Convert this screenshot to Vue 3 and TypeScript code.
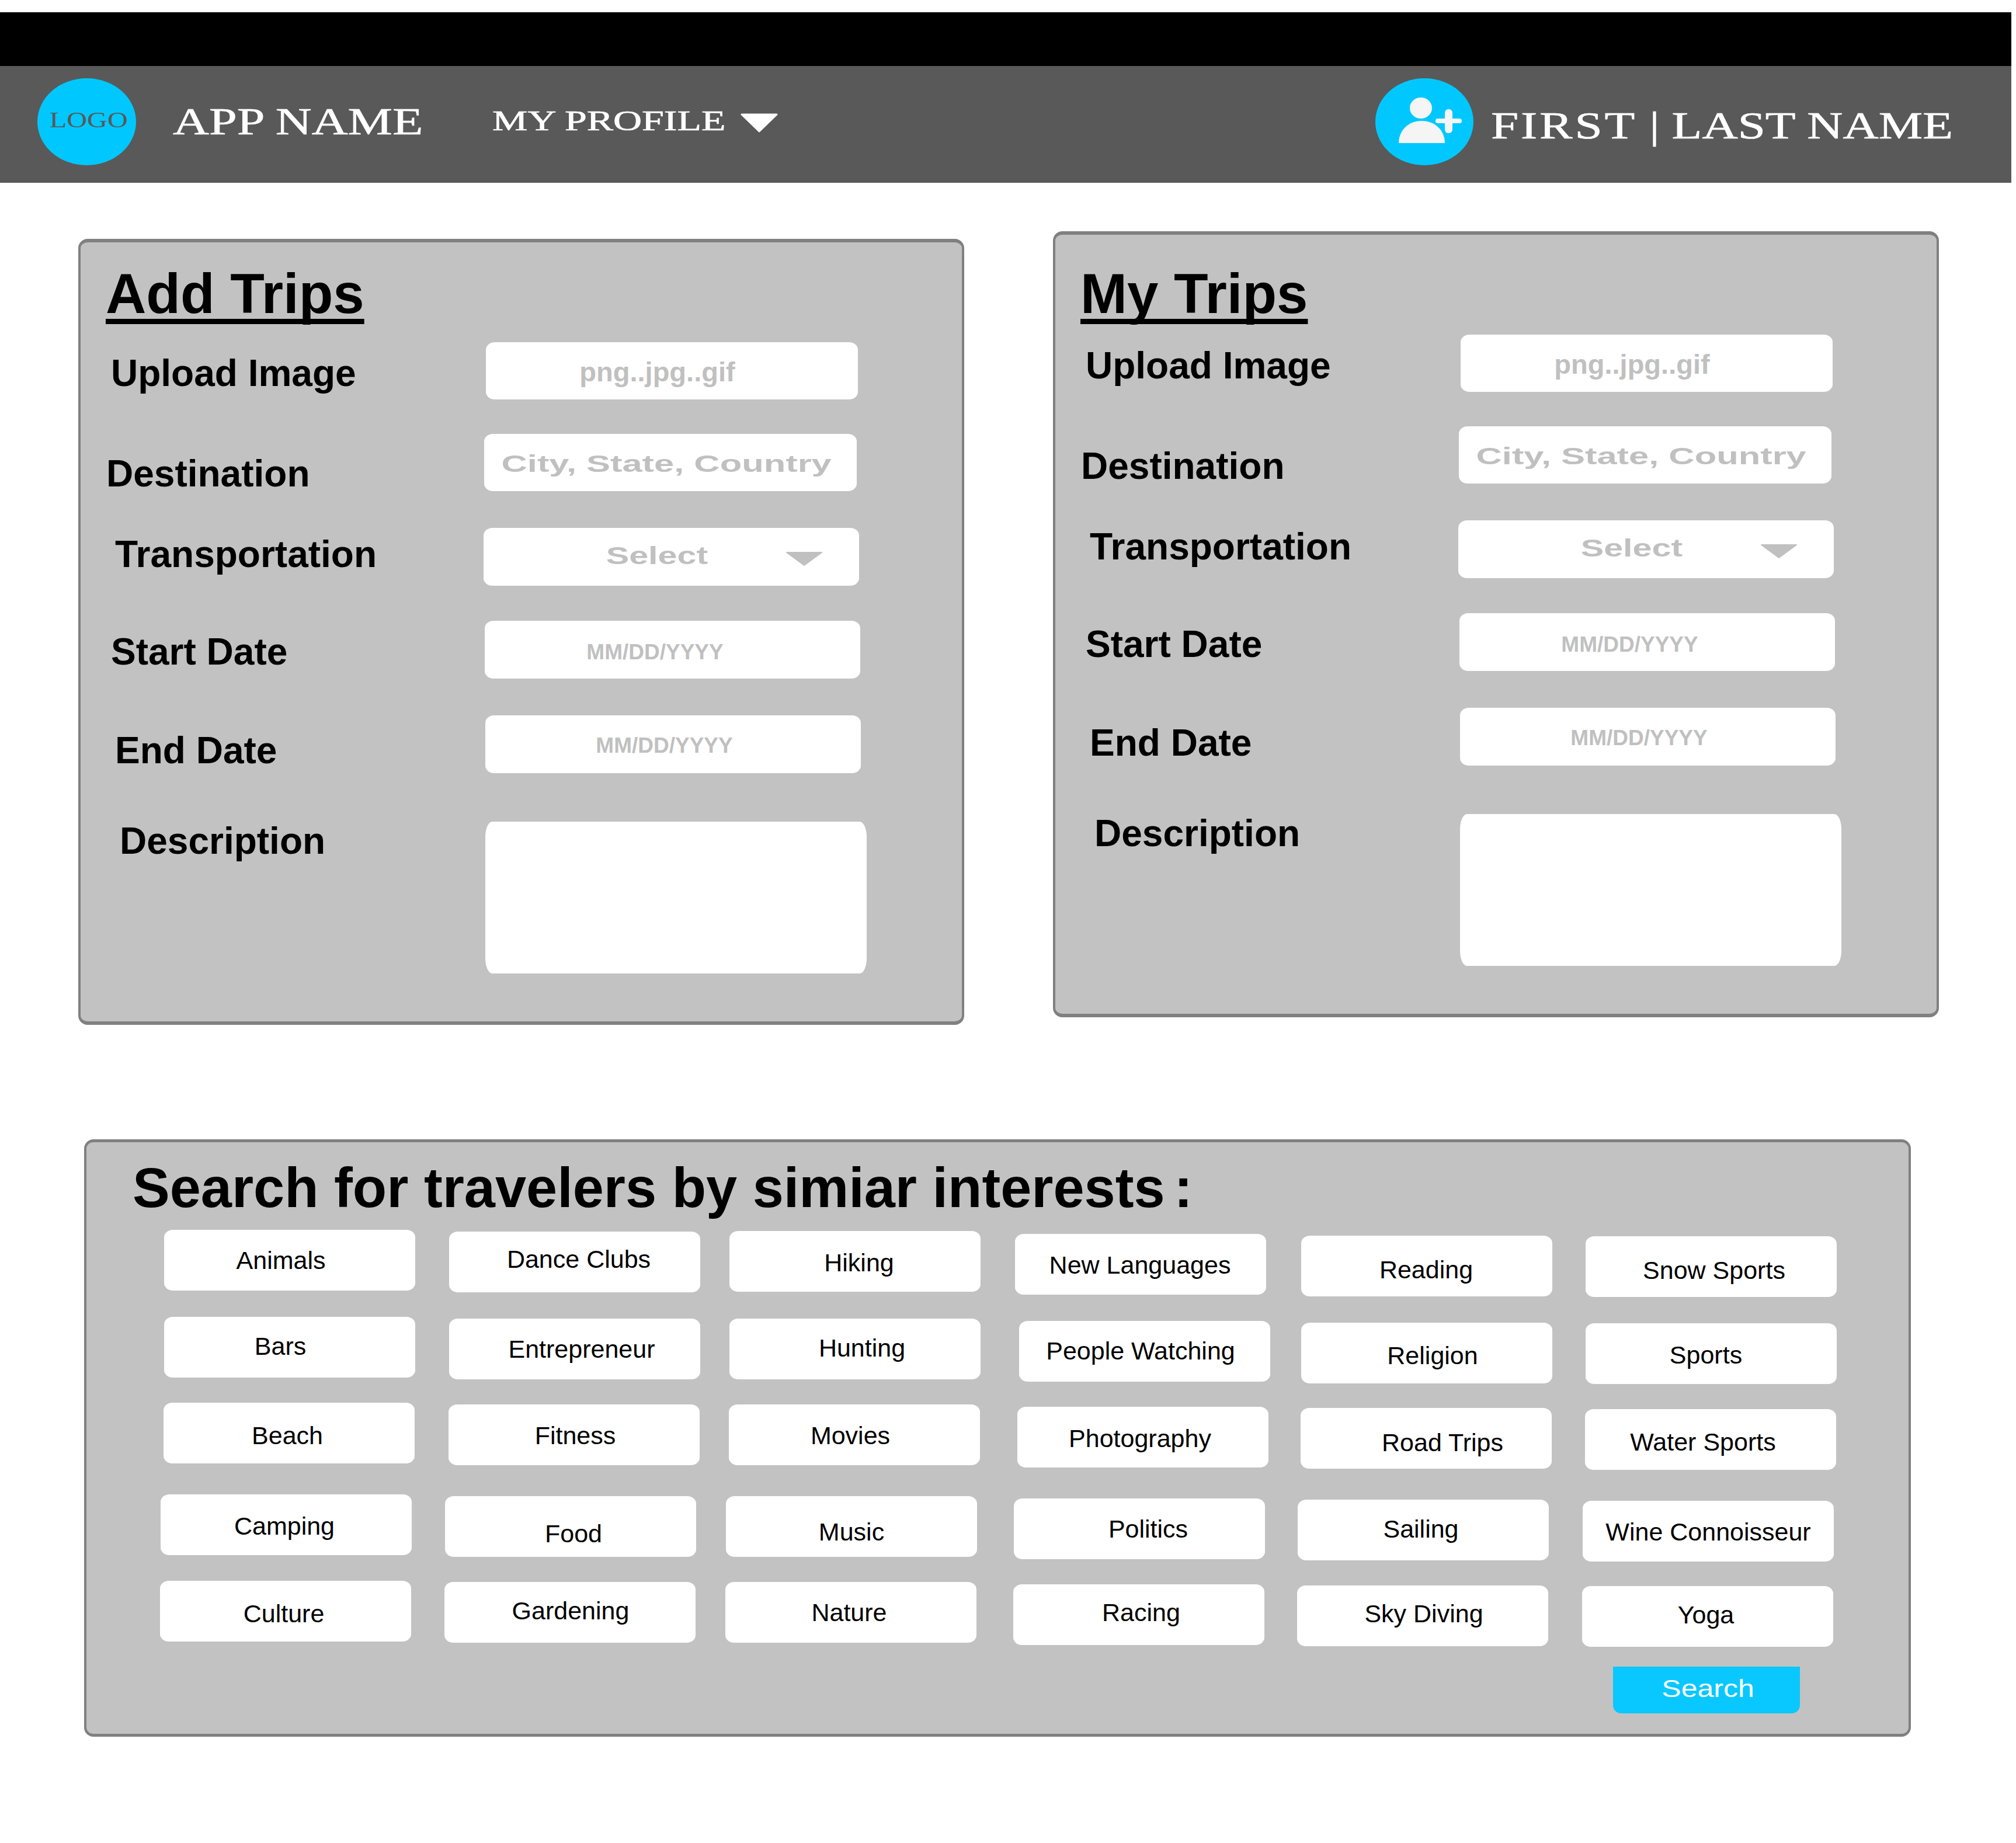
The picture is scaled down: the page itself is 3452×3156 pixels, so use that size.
<script setup lang="ts">
interface FieldRow {
  key: string
  label: string
  labelLeft: number
  labelDrop: number
  fieldLeft: number
  fieldWidth: number
  height: number
  gap: number
  text: string
  kind: string
  dx: number
  dy: number
}

const rows: FieldRow[] = [
  { key: 'upload', label: 'Upload Image', labelLeft: 52, labelDrop: 21, fieldLeft: 694, fieldWidth: 637, height: 98, gap: 0, text: 'png..jpg..gif', kind: 'plain', dx: -25, dy: 1 },
  { key: 'dest', label: 'Destination', labelLeft: 44, labelDrop: 36, fieldLeft: 691, fieldWidth: 638, height: 98, gap: 59, text: 'City, State, Country', kind: 'wide', dx: -7, dy: 2 },
  { key: 'trans', label: 'Transportation', labelLeft: 59, labelDrop: 13, fieldLeft: 690, fieldWidth: 643, height: 99, gap: 63, text: 'Select', kind: 'select', dx: -25, dy: -2 },
  { key: 'start', label: 'Start Date', labelLeft: 52, labelDrop: 21, fieldLeft: 692, fieldWidth: 643, height: 99, gap: 60, text: 'MM/DD/YYYY', kind: 'date', dx: -30, dy: 4 },
  { key: 'end', label: 'End Date', labelLeft: 59, labelDrop: 28, fieldLeft: 693, fieldWidth: 643, height: 99, gap: 63, text: 'MM/DD/YYYY', kind: 'date', dx: -15, dy: 2 },
  { key: 'desc', label: 'Description', labelLeft: 67, labelDrop: 1, fieldLeft: 693, fieldWidth: 653, height: 260, gap: 83, text: '', kind: 'area', dx: 0, dy: 0 },
]

const panels = [
  { title: 'Add Trips', cls: 'panel-add' },
  { title: 'My Trips', cls: 'panel-my' },
]

type Chip = [string, number, number, number, number]

const chipHeight = 104
const gridTop = 2106
const columnLefts = [273, 761, 1242, 1735, 2221, 2709, 3139]

const chipColumns: Chip[][] = [
  [['Animals', 281, 2106, -15, 68], ['Bars', 281, 2255, -16, 66], ['Beach', 280, 2402, -3, 72], ['Camping', 275, 2559, -3, 70], ['Culture', 274, 2707, -3, 72]],
  [['Dance Clubs', 769, 2109, 7, 63], ['Entrepreneur', 769, 2258, 12, 68], ['Fitness', 768, 2405, 2, 69], ['Food', 762, 2562, 5, 80], ['Gardening', 761, 2709, 1, 65]],
  [['Hiking', 1249, 2108, 7, 70], ['Hunting', 1249, 2258, 12, 66], ['Movies', 1248, 2405, -7, 69], ['Music', 1243, 2562, 0, 77], ['Nature', 1242, 2709, -3, 68]],
  [['New Languages', 1738, 2113, -1, 69], ['People Watching', 1745, 2262, -7, 67], ['Photography', 1742, 2409, -5, 70], ['Politics', 1736, 2566, 15, 68], ['Racing', 1735, 2713, 4, 64]],
  [['Reading', 2228, 2116, -1, 74], ['Religion', 2228, 2265, 10, 72], ['Road Trips', 2227, 2411, 28, 75], ['Sailing', 2222, 2568, -4, 66], ['Sky Diving', 2221, 2715, 2, 64]],
  [['Snow Sports', 2715, 2117, 5, 74], ['Sports', 2715, 2266, -9, 70], ['Water Sports', 2714, 2413, -13, 72], ['Wine Connoisseur', 2710, 2570, 0, 69], ['Yoga', 2709, 2716, -3, 65]],
]

function nudge(dx: number, dy: number) {
  return {
    paddingLeft: `${Math.max(0, dx * 2)}px`,
    paddingRight: `${Math.max(0, -dx * 2)}px`,
    paddingTop: `${Math.max(0, dy * 2)}px`,
    paddingBottom: `${Math.max(0, -dy * 2)}px`,
  }
}

function rowStyle(r: FieldRow, i: number) {
  return { height: `${r.height}px`, marginTop: i === 0 ? undefined : `${r.gap}px`, paddingLeft: `${r.labelLeft}px` }
}

function labelStyle(r: FieldRow) {
  return { width: `${r.fieldLeft - r.labelLeft}px`, marginTop: `${r.labelDrop}px` }
}

function fieldStyle(r: FieldRow) {
  return { width: `${r.fieldWidth}px`, ...nudge(r.dx, r.dy) }
}

function chipStyle(chip: Chip, col: number, row: number) {
  const prevBottom = row === 0 ? gridTop : chipColumns[col][row - 1][2] + chipHeight
  return {
    marginLeft: `${chip[1] - columnLefts[col]}px`,
    marginTop: `${chip[2] - prevBottom}px`,
    ...nudge(chip[3], chip[4] - 68),
  }
}

function columnStyle(col: number) {
  return { width: `${columnLefts[col + 1] - columnLefts[col]}px` }
}
</script>

<template>
  <div class="page">
    <div class="topstrip"></div>
    <header class="navbar">
      <div class="logo"><span class="logo-text">LOGO</span></div>
      <div class="stretch app-name"><span>APP NAME</span></div>
      <div class="stretch profile"><span>MY PROFILE</span></div>
      <svg class="profile-caret" viewBox="0 0 64 33" width="64" height="33">
        <polygon points="2,2 62,2 32,31" fill="#fff" stroke="#fff" stroke-width="3" stroke-linejoin="round" />
      </svg>
      <svg class="avatar" viewBox="0 0 168 149" width="168" height="149">
        <ellipse cx="84" cy="74.5" rx="84" ry="74.5" fill="#00c8ff" />
        <ellipse cx="78" cy="51" rx="19" ry="18" fill="#f5f5f5" />
        <path d="M40 111 C40 90 56 73 79 73 C103 73 119 90 119 111 Z" fill="#f5f5f5" />
        <rect x="103" y="69" width="45" height="8" rx="4" fill="#f5f5f5" />
        <rect x="119" y="53" width="13" height="41" rx="6" fill="#f5f5f5" />
      </svg>
      <div class="stretch user-name"><span><b class="first-word">FIRST</b> | LAST NAME</span></div>
    </header>

    <main>
      <div class="trip-panels">
        <section v-for="panel in panels" :key="panel.title" class="panel" :class="panel.cls">
          <h2 class="panel-title">{{ panel.title }}</h2>
          <div
            v-for="(row, i) in rows"
            :key="row.key"
            class="form-row"
            :style="rowStyle(row, i)"
          >
            <div class="form-label" :style="labelStyle(row)">{{ row.label }}</div>
            <div class="field" :class="'field-' + row.kind" :style="fieldStyle(row)">
              <span v-if="row.text">{{ row.text }}</span>
              <svg v-if="row.kind === 'select'" class="select-caret" viewBox="0 0 64 26" width="64" height="26">
                <polygon points="2,2 62,2 32,24" fill="#c0c0c0" stroke="#c0c0c0" stroke-width="2" stroke-linejoin="round" />
              </svg>
            </div>
          </div>
        </section>
      </div>

      <section class="search-panel">
        <h2 class="search-title">Search for travelers by simiar interests<span class="colon"> :</span></h2>
        <div class="chip-grid">
          <div v-for="(col, c) in chipColumns" :key="c" class="chip-col" :style="columnStyle(c)">
            <div v-for="(chip, r) in col" :key="chip[0]" class="chip" :style="chipStyle(chip, c, r)">{{ chip[0] }}</div>
          </div>
        </div>
        <div class="search-action">
          <button class="search-btn" type="button"><span>Search</span></button>
        </div>
      </section>
    </main>
  </div>
</template>

<style scoped>
.page {
  box-sizing: border-box;
  width: 3452px;
  height: 3156px;
  padding-top: 21px;
  background: #fff;
  font-family: "Liberation Sans", Arial, sans-serif;
  color: #000;
  overflow: hidden;
}
.topstrip {
  width: 3444px;
  height: 92px;
  background: #000;
}
.navbar {
  display: flex;
  align-items: flex-start;
  width: 3444px;
  height: 200px;
  background: #595959;
  font-family: "Liberation Serif", "Times New Roman", serif;
  color: #fff;
}
.logo {
  box-sizing: border-box;
  display: flex;
  align-items: center;
  justify-content: center;
  flex: none;
  width: 169px;
  height: 149px;
  margin: 21px 0 0 64px;
  padding: 0 0 8px 7px;
  border-radius: 50%;
  background: #00c8ff;
  color: #595959;
  font-size: 38px;
}
.logo-text {
  display: inline-block;
  transform: scaleX(1.27);
}
.stretch {
  flex: none;
  white-space: nowrap;
  -webkit-text-stroke: 0.7px #fff;
}
.stretch span {
  display: inline-block;
  transform-origin: left center;
}
.app-name {
  width: 425px;
  margin: 62px 0 0 63px;
  font-size: 66px;
  line-height: 66px;
}
.app-name span {
  transform: scaleX(1.3);
}
.profile {
  width: 396px;
  margin: 70px 0 0 122px;
  font-size: 48px;
  line-height: 48px;
}
.profile span {
  transform: scaleX(1.415);
}
.profile-caret {
  flex: none;
  margin: 81px 0 0 29px;
}
.avatar {
  flex: none;
  margin: 21px 0 0 auto;
}
.user-name {
  width: 787px;
  margin: 69px 104px 0 30px;
  font-size: 66px;
  line-height: 66px;
}
.user-name span {
  transform: scaleX(1.285);
}
.first-word {
  font-weight: 400;
  letter-spacing: 3px;
}
.trip-panels {
  display: flex;
  align-items: flex-start;
  padding-left: 134px;
}
.panel {
  box-sizing: border-box;
  flex: none;
  width: 1517px;
  height: 1346px;
  border: solid #808080;
  border-width: 6px 4px;
  border-radius: 16px;
  background: #c2c2c2;
}
.panel-add {
  margin-top: 96px;
  padding-top: 40px;
}
.panel-add .panel-title {
  margin-bottom: 35px;
}
.panel-my {
  margin: 83px 0 0 152px;
  padding-top: 53px;
}
.panel-my .panel-title {
  margin-bottom: 22px;
}
.panel-title {
  margin: 0;
  padding-left: 43px;
  font-size: 96px;
  line-height: 96px;
  font-weight: 700;
  text-decoration: underline;
  text-decoration-thickness: 9px;
  text-underline-offset: 10px;
  text-decoration-skip-ink: none;
}
.form-row {
  display: flex;
  align-items: flex-start;
}
.form-label {
  flex: none;
  font-size: 64px;
  line-height: 64px;
  font-weight: 700;
  white-space: nowrap;
}
.field {
  box-sizing: border-box;
  position: relative;
  display: flex;
  align-items: center;
  justify-content: center;
  flex: none;
  height: 100%;
  border-radius: 15px / 13px;
  background: #fff;
  color: #c0c0c0;
  font-weight: 700;
  white-space: nowrap;
}
.field span {
  display: inline-block;
}
.field-plain {
  font-size: 47px;
}
.field-wide {
  font-size: 40px;
}
.field-wide span {
  transform: scaleX(1.535);
}
.field-select {
  font-size: 42px;
}
.field-select span {
  transform: scaleX(1.41);
}
.field-date {
  font-size: 37px;
}
.field-area {
  border-radius: 12px / 26px;
}
.select-caret {
  position: absolute;
  top: 40px;
  right: 62px;
}
.search-panel {
  box-sizing: border-box;
  width: 3128px;
  height: 1023px;
  margin: 196px 0 0 144px;
  border: solid #808080;
  border-width: 5px 4px;
  border-radius: 16px;
  background: #c2c2c2;
}
.search-title {
  height: 96px;
  margin: 0;
  padding: 30px 0 0 79px;
  font-size: 95.5px;
  line-height: 96px;
  font-weight: 700;
  white-space: nowrap;
}
.colon {
  word-spacing: -11px;
}
.chip-grid {
  display: flex;
  align-items: flex-start;
  margin-top: 24px;
  padding-left: 125px;
}
.chip-col {
  flex: none;
}
.chip {
  box-sizing: border-box;
  display: flex;
  align-items: center;
  justify-content: center;
  width: 430px;
  height: 104px;
  border-radius: 15px / 13px;
  background: #fff;
  font-size: 43px;
  white-space: nowrap;
}
.search-action {
  display: flex;
  justify-content: flex-end;
  margin-top: 34px;
  padding-right: 186px;
}
.search-btn {
  box-sizing: border-box;
  display: flex;
  align-items: center;
  justify-content: center;
  width: 320px;
  height: 80px;
  padding: 0 0 5px 6px;
  border: 0;
  border-radius: 0 0 14px 14px;
  background: #08c8ff;
  color: #fff;
  font-family: "Liberation Sans", Arial, sans-serif;
  font-size: 42px;
}
.search-btn span {
  display: inline-block;
  transform: scaleX(1.19);
}
</style>
